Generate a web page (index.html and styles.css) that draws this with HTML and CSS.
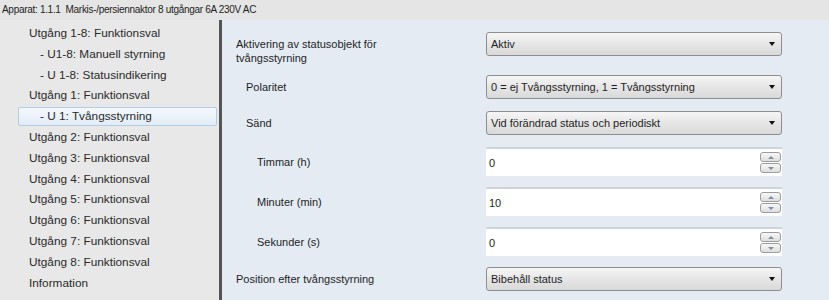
FILE: index.html
```html
<!DOCTYPE html>
<html lang="sv">
<head>
  <meta charset="UTF-8" />
  <title>Markis-/persiennaktor</title>
  <link rel="stylesheet" href="styles.css">
</head>
<body>

  <div class="title-bar">Apparat: 1.1.1&nbsp; Markis-/persiennaktor 8 utgångar 6A 230V AC</div>

  <div class="main">
    <div class="tree">
      <div class="node">Utgång 1-8: Funktionsval</div>
      <div class="node sub">- U1-8: Manuell styrning</div>
      <div class="node sub">- U 1-8: Statusindikering</div>
      <div class="node">Utgång 1: Funktionsval</div>
      <div class="node sub selected">- U 1: Tvångsstyrning</div>
      <div class="node">Utgång 2: Funktionsval</div>
      <div class="node">Utgång 3: Funktionsval</div>
      <div class="node">Utgång 4: Funktionsval</div>
      <div class="node">Utgång 5: Funktionsval</div>
      <div class="node">Utgång 6: Funktionsval</div>
      <div class="node">Utgång 7: Funktionsval</div>
      <div class="node">Utgång 8: Funktionsval</div>
      <div class="node">Information</div>
    </div>

    <div class="divider"></div>

    <div class="params">
      <div class="row first">
        <div class="label">Aktivering av statusobjekt för<br>tvångsstyrning</div>
        <div class="combo"><span>Aktiv</span><i class="arrow"></i></div>
      </div>
      <div class="row">
        <div class="label lvl1">Polaritet</div>
        <div class="combo"><span>0 = ej Tvångsstyrning, 1 = Tvångsstyrning</span><i class="arrow"></i></div>
      </div>
      <div class="row">
        <div class="label lvl1">Sänd</div>
        <div class="combo"><span>Vid förändrad status och periodiskt</span><i class="arrow"></i></div>
      </div>
      <div class="row spin-row">
        <div class="label lvl2">Timmar (h)</div>
        <div class="spinbox"><span>0</span>
          <div class="spin"><b class="up"></b><b class="down"></b></div>
        </div>
      </div>
      <div class="row spin-row">
        <div class="label lvl2">Minuter (min)</div>
        <div class="spinbox"><span>10</span>
          <div class="spin"><b class="up"></b><b class="down"></b></div>
        </div>
      </div>
      <div class="row spin-row">
        <div class="label lvl2">Sekunder (s)</div>
        <div class="spinbox"><span>0</span>
          <div class="spin"><b class="up"></b><b class="down"></b></div>
        </div>
      </div>
      <div class="row">
        <div class="label">Position efter tvångsstyrning</div>
        <div class="combo"><span>Bibehåll status</span><i class="arrow"></i></div>
      </div>
    </div>
  </div>

</body>
</html>
```

FILE: styles.css
```css
* { margin: 0; padding: 0; box-sizing: border-box; }
body {
  width: 829px;
  height: 300px;
  overflow: hidden;
  font-family: "Liberation Sans", Arial, sans-serif;
  font-size: 11px;
  color: #1e1e1e;
  background: #e4ebf3;
}
.title-bar {
  height: 20px;
  line-height: 20px;
  padding-left: 2px;
  font-size: 10px;
  letter-spacing: -0.3px;
  background: #e5e5e5;
  white-space: nowrap;
}
.main {
  display: flex;
  height: 280px;
}

/* left tree */
.tree {
  width: 219px;
  background: #e8e8e8;
  padding-top: 3px;
  font-size: 11.8px;
  color: #2a2a2a;
}
.node {
  height: 20.8px;
  line-height: 20.8px;
  padding-left: 29px;
  white-space: nowrap;
}
.node.sub { padding-left: 40px; }
.node.selected {
  margin-left: 18px;
  width: 199px;
  padding-left: 21px;
  height: 19px;
  line-height: 17px;
  margin-top: 1px;
  margin-bottom: 0.8px;
  border: 1px solid #b4cde6;
  border-radius: 2px;
  background: linear-gradient(#f4f8fc, #e2ecf7);
}
.divider {
  width: 3px;
  background: #555;
}

/* right parameter list */
.params {
  flex: 1;
  padding: 12px 0 0 14px;
  background: #e4ebf3;
}
.row {
  display: flex;
  align-items: center;
  margin-bottom: 12px;
}
.row.first {
  align-items: flex-start;
  margin-bottom: 10px;
}
.row.first .label { margin-top: 5px; line-height: 14px; }
.row.spin-row { margin-bottom: 11px; }
.label {
  width: 250px;
  flex-shrink: 0;
}
.label.lvl1 { padding-left: 10px; }
.label.lvl2 { padding-left: 21px; }

.combo {
  width: 296px;
  height: 24px;
  display: flex;
  align-items: center;
  justify-content: space-between;
  padding: 0 6px 0 4px;
  border: 1px solid #8e8e8e;
  border-radius: 3px;
  background: linear-gradient(#f6f6f6, #e6e6e6 50%, #d9d9d9);
}
.arrow {
  width: 0;
  height: 0;
  border-left: 3.5px solid transparent;
  border-right: 3.5px solid transparent;
  border-top: 4px solid #111;
}

.spinbox {
  width: 296px;
  height: 29px;
  display: flex;
  align-items: center;
  justify-content: space-between;
  padding: 0 1px 0 3px;
  background: #fff;
  border-top: 2px solid #cfd4da;
}
.spin {
  display: flex;
  flex-direction: column;
  gap: 1px;
}
.spin b {
  display: flex;
  align-items: center;
  justify-content: center;
  width: 21px;
  height: 10px;
  border: 1px solid #9c9c9c;
  border-radius: 3px;
  background: linear-gradient(#f7f7f7, #dedede);
}
.spin b::after {
  content: "";
  border-left: 3px solid transparent;
  border-right: 3px solid transparent;
}
.spin .up::after { border-bottom: 3px solid #7f8ea3; }
.spin .down::after { border-top: 3px solid #7f8ea3; }
```
